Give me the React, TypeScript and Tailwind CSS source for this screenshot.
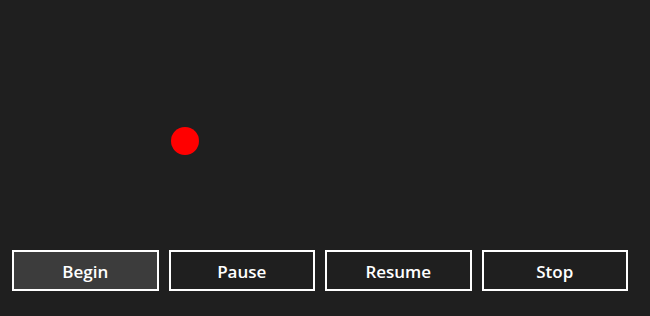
import React from "react";

export default function App() {
  const buttons = ["Begin", "Pause", "Resume", "Stop"];
  return (
    <div className="w-[650px] h-[316px] bg-[#1f1f1f] flex flex-col overflow-hidden" style={{ fontFamily: '"Open Sans", "Noto Sans", sans-serif' }}>
      <div className="relative h-[250px] shrink-0">
        <div className="absolute left-[171px] top-[127px] w-[28px] h-[28px] rounded-full bg-[#ff0000]" />
      </div>
      <div className="flex gap-[10px] pl-[12px]">
        {buttons.map((b, i) => (
          <div
            key={b}
            className={`w-[146.5px] h-[41px] border-2 border-white flex items-center justify-center pt-[2px] text-white text-[17px] font-semibold leading-none ${i === 0 ? "bg-[#3c3c3c]" : "bg-[#1f1f1f]"}`}
          >
            {b}
          </div>
        ))}
      </div>
    </div>
  );
}
